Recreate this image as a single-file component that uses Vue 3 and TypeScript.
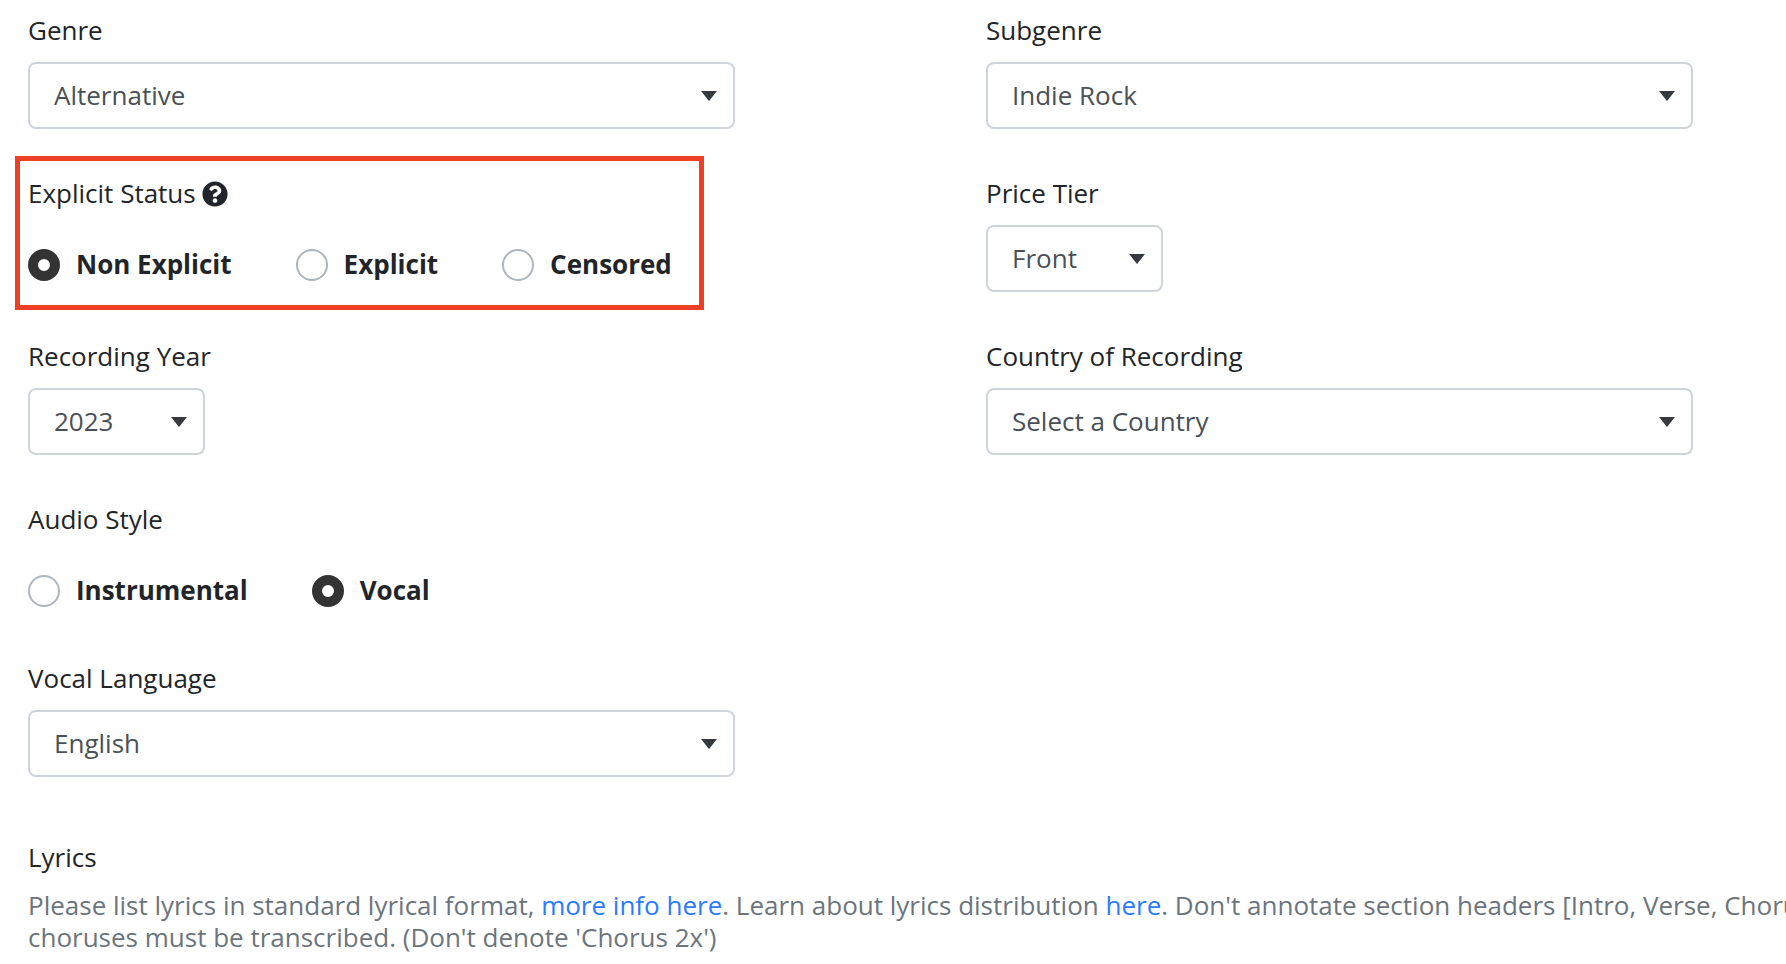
<script setup lang="ts">
import { reactive } from 'vue'

type FieldKey = 'genre' | 'subgenre' | 'explicit' | 'tier' | 'year' | 'country' | 'audio' | 'language'

interface Field {
  key: FieldKey
  label: string
  kind: 'select' | 'radio'
  options: string[]
  compact?: boolean
  wide?: boolean
  highlighted?: boolean
}

const fields: Field[] = [
  { key: 'genre', label: 'Genre', kind: 'select', options: ['Alternative'] },
  { key: 'subgenre', label: 'Subgenre', kind: 'select', options: ['Indie Rock'] },
  {
    key: 'explicit',
    label: 'Explicit Status',
    kind: 'radio',
    options: ['Non Explicit', 'Explicit', 'Censored'],
    highlighted: true,
  },
  { key: 'tier', label: 'Price Tier', kind: 'select', options: ['Front'], compact: true },
  { key: 'year', label: 'Recording Year', kind: 'select', options: ['2023'], compact: true },
  { key: 'country', label: 'Country of Recording', kind: 'select', options: ['Select a Country'] },
  { key: 'audio', label: 'Audio Style', kind: 'radio', options: ['Instrumental', 'Vocal'], wide: true },
  { key: 'language', label: 'Vocal Language', kind: 'select', options: ['English'] },
]

const values = reactive<Record<FieldKey, string>>({
  genre: 'Alternative',
  subgenre: 'Indie Rock',
  explicit: 'Non Explicit',
  tier: 'Front',
  year: '2023',
  country: 'Select a Country',
  audio: 'Vocal',
  language: 'English',
})
</script>

<template>
  <form class="track-form" @submit.prevent>
    <div class="fields">
      <template v-for="field in fields" :key="field.key">
        <div v-if="field.kind === 'select'" class="field">
          <label class="label" :for="field.key">{{ field.label }}</label>
          <div class="select-box" :class="{ compact: field.compact }">
            <select :id="field.key" v-model="values[field.key]" class="select">
              <option v-for="option in field.options" :key="option" :value="option">{{ option }}</option>
            </select>
            <svg class="arrow" viewBox="0 0 16 10" aria-hidden="true"><path d="M0 0h16L8 10z" /></svg>
          </div>
        </div>

        <div
          v-else
          class="field radio-field"
          :class="{ wide: field.wide, highlighted: field.highlighted }"
          role="radiogroup"
          :aria-labelledby="`${field.key}-label`"
        >
          <div class="label">
            <span :id="`${field.key}-label`">{{ field.label }}</span>
            <button v-if="field.highlighted" class="help" type="button" aria-label="About explicit status">
              <svg class="help-icon" viewBox="0 0 512 512" aria-hidden="true">
                <path
                  d="M504 256c0 136.997-111.043 248-248 248S8 392.997 8 256C8 119.083 119.043 8 256 8s248 111.083 248 248zM262.655 90c-54.497 0-89.255 22.957-116.549 63.758-3.536 5.286-2.353 12.415 2.715 16.258l34.699 26.31c5.205 3.947 12.621 3.008 16.665-2.122 17.864-22.658 30.113-35.797 57.303-35.797 20.429 0 45.698 13.148 45.698 32.958 0 14.976-12.363 22.667-32.534 33.976C247.128 238.528 216 254.941 216 296v4c0 6.627 5.373 12 12 12h56c6.627 0 12-5.373 12-12v-1.333c0-28.462 83.186-29.647 83.186-106.667 0-58.002-60.165-102-116.531-102zM256 338c-25.365 0-46 20.635-46 46 0 25.364 20.635 46 46 46s46-20.636 46-46c0-25.364-20.635-46-46-46z"
                />
              </svg>
            </button>
          </div>
          <div class="choices">
            <label v-for="option in field.options" :key="option" class="choice">
              <input v-model="values[field.key]" class="radio" type="radio" :name="field.key" :value="option" />
              <span>{{ option }}</span>
            </label>
          </div>
        </div>
      </template>
    </div>

    <section class="lyrics">
      <h2 class="label">Lyrics</h2>
      <p class="hint">
        Please list lyrics in standard lyrical format, <a href="#">more info here</a>. Learn about lyrics distribution
        <a href="#">here</a>. Don't annotate section headers [Intro, Verse, Chorus<br />choruses must be transcribed.
        (Don't denote 'Chorus 2x')
      </p>
    </section>
  </form>
</template>

<style>
body {
  background: #fff;
  overflow-x: hidden;
}
</style>

<style scoped>
.track-form {
  padding: 11px 0 0 28px;
  color: #212529;
  font-family: 'Open Sans', 'Noto Sans', sans-serif;
  font-size: 26px;
  line-height: 39px;
}

.fields {
  display: grid;
  grid-template-columns: minmax(0, 1fr) minmax(0, 1fr);
  gap: 45px 251px;
  align-items: start;
  padding-right: 93px;
}

.field {
  display: flex;
  flex-direction: column;
  gap: 12px;
}

.label {
  display: flex;
  align-items: center;
  gap: 6px;
  margin: 0;
  font-size: 26px;
  font-weight: 400;
}

.select-box {
  display: grid;
  align-items: center;
}

.select-box.compact {
  width: 177px;
}

.select {
  grid-area: 1 / 1;
  width: 100%;
  height: 67px;
  margin: 0;
  padding: 0 48px 0 24px;
  border: 2px solid #ced4da;
  border-radius: 8px;
  background: #fff;
  color: #495057;
  font: inherit;
  appearance: none;
}

.arrow {
  grid-area: 1 / 1;
  justify-self: end;
  width: 16px;
  height: 10px;
  margin-right: 18px;
  fill: #343a40;
  pointer-events: none;
}

.radio-field {
  position: relative;
  justify-self: start;
  gap: 32px;
  padding-bottom: 4px;
}

.radio-field.wide {
  grid-column: 1 / -1;
}

/* Callout frame drawn around the group */
.highlighted::after {
  content: '';
  position: absolute;
  inset: -18px -32px -22px -13px;
  border: 5px solid #ee4027;
  pointer-events: none;
}

.help {
  display: flex;
  padding: 0;
  border: 0;
  background: none;
  color: inherit;
}

.help-icon {
  width: 26px;
  height: 26px;
  fill: currentColor;
}

.choices {
  display: flex;
  gap: 64px;
}

.choice {
  display: flex;
  align-items: center;
  gap: 16px;
  font-weight: 700;
  white-space: nowrap;
}

.radio {
  width: 32px;
  height: 32px;
  margin: 0;
  border: 2px solid #adb5bd;
  border-radius: 50%;
  background: #fff;
  appearance: none;
}

.radio:checked {
  border: 10px solid #333;
}

.lyrics {
  margin-top: 61px;
}

.hint {
  margin: 12px 0 0;
  color: #6c757d;
  line-height: 32px;
  white-space: nowrap;
}

.hint a {
  color: #2a7bff;
  text-decoration: none;
}
</style>
